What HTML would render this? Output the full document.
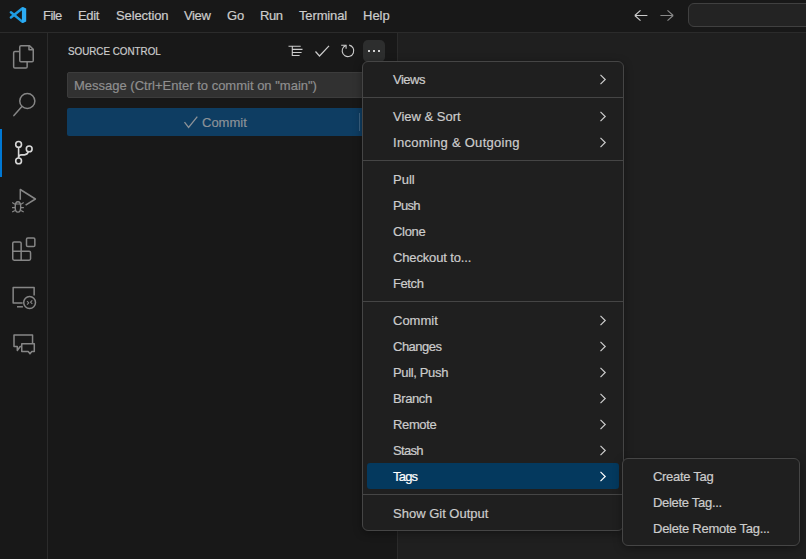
<!DOCTYPE html>
<html><head><meta charset="utf-8">
<style>
*{box-sizing:border-box;margin:0;padding:0}
html,body{width:806px;height:559px;overflow:hidden;background:#1f1f1f;font-family:"Liberation Sans",sans-serif;color:#cccccc}
span{-webkit-text-stroke:0.2px currentColor}
.abs{position:absolute}
#title{left:0;top:0;width:806px;height:33px;background:#181818;border-bottom:1px solid #2b2b2b}
.tm{position:absolute;top:8px;font-size:13px;line-height:16px;color:#cccccc;white-space:pre}
#act{left:0;top:33px;width:48px;height:526px;background:#181818;border-right:1px solid #2b2b2b}
#side{left:48px;top:33px;width:350px;height:526px;background:#181818;border-right:1px solid #2b2b2b}
.ic{position:absolute;left:0;width:48px;height:48px}
.menu{position:absolute;background:#1f1f1f;border:1px solid #454545;border-radius:6px;box-shadow:0 2px 8px rgba(0,0,0,.36)}
.mi{position:absolute;left:4px;right:4px;height:26px;border-radius:3px}
.mi span{position:absolute;left:26px;top:6px;font-size:13px;line-height:16px;white-space:pre;color:#cccccc}
.mi svg{position:absolute;right:12px;top:8px}
.sep{position:absolute;left:0;right:0;height:1px;background:#454545}
.sel{background:#04395e}
.sel span{color:#ffffff}
.sel path{stroke:#ffffff}
</style></head><body>
<div id="title" class="abs">
  <svg class="abs" style="left:6px;top:4px" width="24" height="24" viewBox="0 0 24 24">
    <path d="M4.9 8.2 L16.2 17.6 M4.9 13.4 L16.2 4.6" stroke="#1e9de3" stroke-width="2.5" stroke-linecap="round"/>
    <path d="M15.9 3.4 L17 3 L20.2 4.5 V17.5 L17 19 L15.9 18.6 Z" fill="#2cacf4"/>
  </svg>
  <span class="tm" style="left:43px;letter-spacing:-0.55px">File</span>
  <span class="tm" style="left:78px;letter-spacing:-0.33px">Edit</span>
  <span class="tm" style="left:116px;letter-spacing:-0.12px">Selection</span>
  <span class="tm" style="left:184px;letter-spacing:-0.36px">View</span>
  <span class="tm" style="left:227px">Go</span>
  <span class="tm" style="left:260px;letter-spacing:-0.43px">Run</span>
  <span class="tm" style="left:299px;letter-spacing:-0.14px">Terminal</span>
  <span class="tm" style="left:363px">Help</span>
  <svg class="abs" style="left:630px;top:6px" width="50" height="20" viewBox="0 0 50 20" fill="none" stroke-width="1.1">
    <path d="M4.8 9.5 H17.4 M4.8 9.5 L10.5 4.3 M4.8 9.5 L10.5 14.7" stroke="#cccccc"/>
    <path d="M30.4 9.5 H43.2 M43.2 9.5 L37.5 4.3 M43.2 9.5 L37.5 14.7" stroke="#8a8a8a"/>
  </svg>
  <div class="abs" style="left:688px;top:3px;width:140px;height:24px;background:#232323;border:1px solid #404040;border-radius:6px"></div>
</div>

<div id="act" class="abs"></div>
<div class="abs" style="left:0;top:129px;width:2px;height:48px;background:#0078d4"></div>

<div id="side" class="abs"></div>
<svg class="abs" style="left:0;top:0" width="48" height="400" viewBox="0 0 48 400" fill="none" stroke-width="1.5" stroke-linejoin="round">
  <g stroke="#868686">
    <path d="M21 45.75 H29.6 L33.25 49.4 V60.5 Q33.25 61.75 32 61.75 H21 Q19.75 61.75 19.75 60.5 V47 Q19.75 45.75 21 45.75 Z"/>
    <path d="M29 45.75 V49.7 H33.25"/>
    <path d="M19.75 51.45 H14.9 Q13.65 51.45 13.65 52.7 V66.8 Q13.65 68.05 14.9 68.05 H25.9 Q27.15 68.05 27.15 66.8 V61.75"/>
    <circle cx="27.3" cy="101" r="7.55"/>
    <path d="M21.9 106.5 L13.9 115.6" stroke-linecap="round"/>
    <path d="M20.3 199.7 V189.5 L35.4 199 L25.6 205.2"/>
    <ellipse cx="17.95" cy="206.9" rx="2.75" ry="5.2" stroke-width="1.4"/>
    <path d="M15.3 204 H20.6 M12.2 202.6 L14.9 204.2 M23.7 202.6 L21 204.2 M12 207.7 H15 M20.9 207.7 H23.9 M12.2 212 L14.9 210.4 M23.7 212 L21 210.4" stroke-width="1.2"/>
    <path d="M14.15 241.95 H19.75 Q21.15 241.95 21.15 243.35 V251.35 H29.15 Q30.55 251.35 30.55 252.75 V258.75 Q30.55 260.15 29.15 260.15 H14.15 Q12.75 260.15 12.75 258.75 V243.35 Q12.75 241.95 14.15 241.95 Z M12.75 251.35 H21.15 V260.15"/>
    <rect x="26.5" y="238.05" width="8.35" height="8.4" rx="1.3"/>
    <path d="M22.6 302.95 H13.15 V287.55 H34.15 V295.6"/>
    <path d="M17 306.8 H22.9"/>
    <circle cx="29.6" cy="302.5" r="5.9"/>
    <path d="M27 301.2 L28.8 302.9 L27 304.6 M32.3 300.4 L30.5 302.1 L32.3 303.8" stroke-width="1.1"/>
    <path d="M21.75 346.55 H20.2 L17.3 350.5 V346.55 H14 V335 H32.55 V343.85"/>
    <path d="M21.75 343.85 H34.3 V351.55 H31.8 L30 353.8 L28.2 351.55 H21.75 Z"/>
  </g>
  <g stroke="#d7d7d7" stroke-width="1.6">
    <circle cx="18.6" cy="144.4" r="2.9"/>
    <circle cx="18.6" cy="160.9" r="2.9"/>
    <circle cx="29.2" cy="148.9" r="2.9"/>
    <path d="M18.6 147.3 V158"/>
    <path d="M28.4 151.6 C27.6 154 26.6 154.9 24.5 154.9 H21.4 C19.8 154.9 18.8 155.6 18.6 157"/>
  </g>
</svg>

<span class="abs" style="left:68px;top:45px;font-size:10.5px;line-height:13px;color:#cccccc;white-space:pre;transform:scaleX(0.935);transform-origin:0 0">SOURCE CONTROL</span>
<svg class="abs" style="left:286px;top:42px" width="18" height="18" viewBox="0 0 18 18">
  <path d="M2.5 4.25 H14.7 M6.3 4.25 V14 M6.3 7.35 H16.5 M6.3 10.5 H15.6 M6.3 13.5 H13.6" stroke="#cccccc" stroke-width="1.1" fill="none"/>
</svg>
<svg class="abs" style="left:313px;top:42px" width="18" height="18" viewBox="0 0 18 18">
  <path d="M2.5 9.5 L6.5 14 L16 3.8" stroke="#cccccc" stroke-width="1.2" fill="none"/>
</svg>
<svg class="abs" style="left:339px;top:42px" width="18" height="18" viewBox="0 0 18 18">
  <path d="M10.2 3.15 A5.8 5.8 0 1 1 4.6 5.0 L6.8 3.5" stroke="#cccccc" stroke-width="1.1" fill="none"/>
  <path d="M2.2 3.3 H7.1 V6.8" stroke="#cccccc" stroke-width="1.1" fill="none"/>
</svg>
<div class="abs" style="left:363px;top:40px;width:22px;height:22px;background:#2d2e2e;border-radius:5px"></div>
<svg class="abs" style="left:363px;top:40px" width="22" height="22" viewBox="0 0 22 22">
  <rect x="5" y="10" width="2" height="2" fill="#d0d0d0"/><rect x="10" y="10" width="2" height="2" fill="#d0d0d0"/><rect x="15" y="10" width="2" height="2" fill="#d0d0d0"/>
</svg>
<div class="abs" style="left:67px;top:72px;width:320px;height:26px;background:#313131;border:1px solid #3c3c3c;border-radius:2px"></div>
<span class="abs" style="left:74px;top:78px;font-size:13px;line-height:16px;color:#8f8f8f;white-space:pre">Message (Ctrl+Enter to commit on "main")</span>
<div class="abs" style="left:67px;top:108px;width:320px;height:28px;background:#0e3d62;border-radius:2px"></div>
<svg class="abs" style="left:183px;top:115px" width="16" height="14" viewBox="0 0 16 14">
  <path d="M1.5 7.2 L5.6 12.4 L14.3 1.6" stroke="#8c9298" stroke-width="1.3" fill="none"/>
</svg>
<span class="abs" style="left:202px;top:115px;font-size:13px;line-height:16px;color:#8c9298;white-space:pre">Commit</span>
<div class="abs" style="left:359px;top:113px;width:1px;height:18px;background:#3c6283"></div>


<div class="menu" style="left:362px;top:61px;width:262px;height:470px">
  <div class="mi" style="top:4px"><span style="letter-spacing:-0.5px">Views</span><svg width="8" height="11" viewBox="0 0 8 11"><path d="M1.5 0.8 L6.2 5.5 L1.5 10.2" stroke="#cccccc" stroke-width="1.2" fill="none"/></svg></div>
  <div class="mi" style="top:41px"><span>View &amp; Sort</span><svg width="8" height="11" viewBox="0 0 8 11"><path d="M1.5 0.8 L6.2 5.5 L1.5 10.2" stroke="#cccccc" stroke-width="1.2" fill="none"/></svg></div>
  <div class="mi" style="top:67px"><span style="letter-spacing:0.28px">Incoming &amp; Outgoing</span><svg width="8" height="11" viewBox="0 0 8 11"><path d="M1.5 0.8 L6.2 5.5 L1.5 10.2" stroke="#cccccc" stroke-width="1.2" fill="none"/></svg></div>
  <div class="mi" style="top:104px"><span>Pull</span></div>
  <div class="mi" style="top:130px"><span style="letter-spacing:-0.7px">Push</span></div>
  <div class="mi" style="top:156px"><span style="letter-spacing:-0.3px">Clone</span></div>
  <div class="mi" style="top:182px"><span style="letter-spacing:-0.15px">Checkout to...</span></div>
  <div class="mi" style="top:208px"><span style="letter-spacing:-0.4px">Fetch</span></div>
  <div class="mi" style="top:245px"><span>Commit</span><svg width="8" height="11" viewBox="0 0 8 11"><path d="M1.5 0.8 L6.2 5.5 L1.5 10.2" stroke="#cccccc" stroke-width="1.2" fill="none"/></svg></div>
  <div class="mi" style="top:271px"><span style="letter-spacing:-0.5px">Changes</span><svg width="8" height="11" viewBox="0 0 8 11"><path d="M1.5 0.8 L6.2 5.5 L1.5 10.2" stroke="#cccccc" stroke-width="1.2" fill="none"/></svg></div>
  <div class="mi" style="top:297px"><span style="letter-spacing:-0.35px">Pull, Push</span><svg width="8" height="11" viewBox="0 0 8 11"><path d="M1.5 0.8 L6.2 5.5 L1.5 10.2" stroke="#cccccc" stroke-width="1.2" fill="none"/></svg></div>
  <div class="mi" style="top:323px"><span style="letter-spacing:-0.4px">Branch</span><svg width="8" height="11" viewBox="0 0 8 11"><path d="M1.5 0.8 L6.2 5.5 L1.5 10.2" stroke="#cccccc" stroke-width="1.2" fill="none"/></svg></div>
  <div class="mi" style="top:349px"><span style="letter-spacing:-0.36px">Remote</span><svg width="8" height="11" viewBox="0 0 8 11"><path d="M1.5 0.8 L6.2 5.5 L1.5 10.2" stroke="#cccccc" stroke-width="1.2" fill="none"/></svg></div>
  <div class="mi" style="top:375px"><span style="letter-spacing:-0.7px">Stash</span><svg width="8" height="11" viewBox="0 0 8 11"><path d="M1.5 0.8 L6.2 5.5 L1.5 10.2" stroke="#cccccc" stroke-width="1.2" fill="none"/></svg></div>
  <div class="mi sel" style="top:401px"><span style="letter-spacing:-0.8px">Tags</span><svg width="8" height="11" viewBox="0 0 8 11"><path d="M1.5 0.8 L6.2 5.5 L1.5 10.2" stroke="#cccccc" stroke-width="1.2" fill="none"/></svg></div>
  <div class="mi" style="top:438px"><span>Show Git Output</span></div>
  <div class="sep" style="top:35px"></div>
  <div class="sep" style="top:98px"></div>
  <div class="sep" style="top:239px"></div>
  <div class="sep" style="top:432px"></div>
</div>
<div class="menu" style="left:622px;top:458px;width:178px;height:88px">
  <div class="mi" style="top:4px"><span style="letter-spacing:-0.3px">Create Tag</span></div>
  <div class="mi" style="top:30px"><span style="letter-spacing:-0.3px">Delete Tag...</span></div>
  <div class="mi" style="top:56px"><span style="letter-spacing:-0.26px">Delete Remote Tag...</span></div>
</div>
</body></html>
